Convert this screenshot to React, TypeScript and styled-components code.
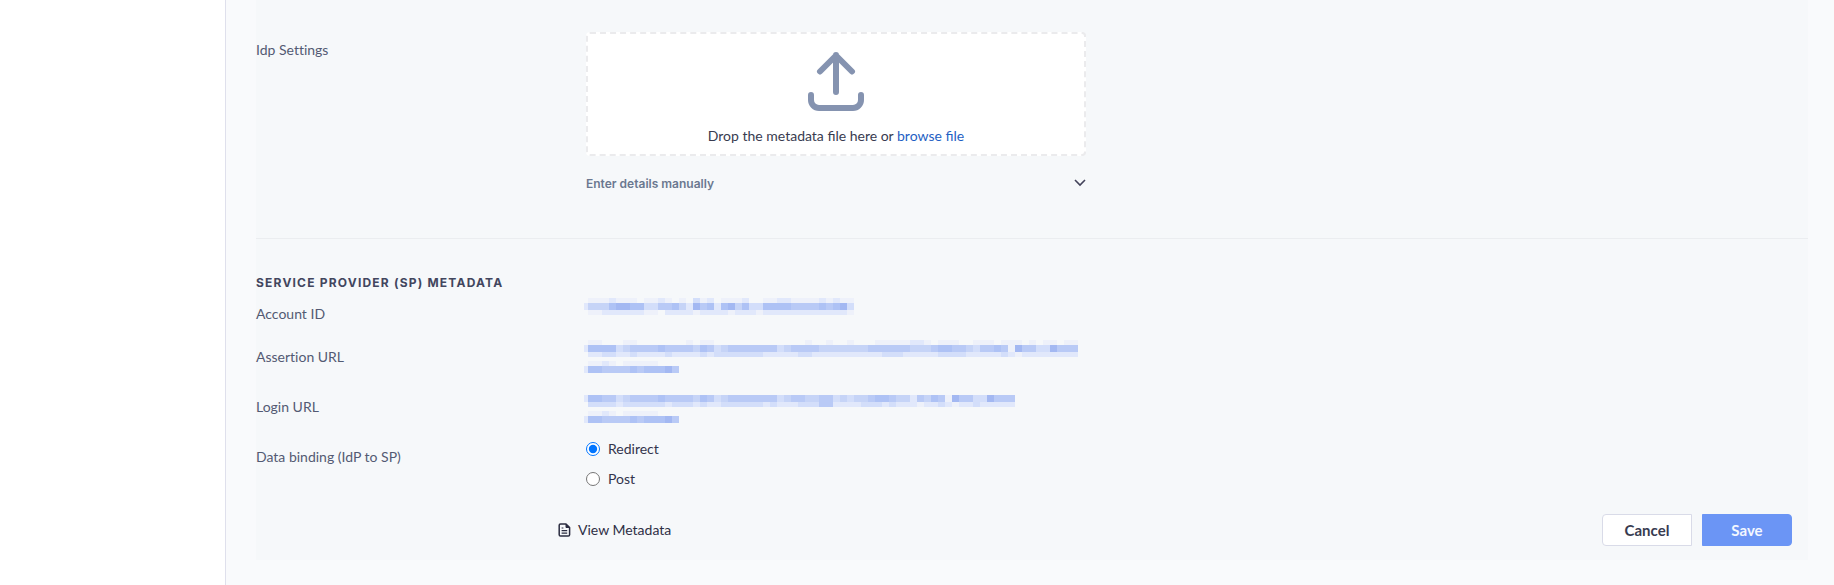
import React, { useState } from "react";
import styled, { createGlobalStyle } from "styled-components";

const GlobalStyle = createGlobalStyle`
  *, *::before, *::after { box-sizing: border-box; }
  body {
    margin: 0;
    background: #f9fafc;
    color: #383b50;
    font-family: Lato, sans-serif;
    font-size: 14px;
    line-height: 20px;
  }
  button, input { font: inherit; color: inherit; }
`;

const Shell = styled.div`
  display: flex;
  min-height: 100vh;
`;

const Sidebar = styled.aside`
  flex: 0 0 226px;
  background: #ffffff;
  border-right: 1px solid #dfe0ec;
`;

const Main = styled.main`
  flex: 1;
  min-width: 0;
  padding: 0 26px 24px 30px;
`;

const Panel = styled.form`
  background: #f6f8fa;
`;

const Section = styled.section<{ $divided?: boolean }>`
  padding-top: ${(p) => (p.$divided ? 33 : 30)}px;
  border-top: ${(p) => (p.$divided ? "1px solid #ebedf0" : "0")};
`;

const Heading = styled.h2`
  margin: 0;
  font-family: Inter, sans-serif;
  font-size: 12px;
  font-weight: 700;
  line-height: 22px;
  letter-spacing: 0.1em;
  text-transform: uppercase;
  color: #42465e;
`;

const Field = styled.div<{ $height: number }>`
  display: grid;
  grid-template-columns: 330px minmax(0, 500px);
  min-height: ${(p) => p.$height}px;
`;

const FieldLabel = styled.div`
  padding-top: 10px;
  color: #535a73;
  font-variant-ligatures: none;
`;

const FieldValue = styled.div<{ $top?: number }>`
  padding-top: ${(p) => p.$top ?? 3}px;
`;

const DropZone = styled.div`
  display: flex;
  flex-direction: column;
  align-items: center;
  gap: 15px;
  height: 124px;
  padding-top: 18px;
  background: #ffffff;
  border: 2px dashed #ebebed;
  border-radius: 4px;
`;

const UploadIcon = styled.svg`
  flex: none;
  width: 56px;
  height: 59px;
  fill: none;
  stroke: #8593b0;
  stroke-width: 6;
  stroke-linecap: round;
  stroke-linejoin: round;
`;

const DropText = styled.p`
  margin: 0;
`;

const BrowseLink = styled.a`
  color: #1f5fc4;
  text-decoration: none;
`;

const Disclosure = styled.button`
  display: flex;
  align-items: center;
  justify-content: space-between;
  width: 100%;
  margin-top: 18px;
  padding: 0;
  border: 0;
  background: none;
  font-family: Inter, sans-serif;
  font-size: 12px;
  font-weight: 600;
  line-height: 20px;
  color: #6b7890;
`;

const Chevron = styled.svg`
  width: 12px;
  height: 12px;
  fill: none;
  stroke: #43435a;
  stroke-width: 1.6;
`;

const MaskLine = styled.svg`
  display: block;
  width: 100%;
  height: 21px;
  overflow: visible;
`;

const RadioGroup = styled.div`
  display: flex;
  flex-direction: column;
  gap: 12px;
`;

const RadioOption = styled.label`
  display: flex;
  align-items: center;
  gap: 8px;
  line-height: 18px;
  color: #33344c;
`;

const Radio = styled.input`
  flex: none;
  width: 14px;
  height: 14px;
  margin: 0;
  accent-color: #0075ff;
`;

const Footer = styled.footer`
  display: flex;
  align-items: center;
  gap: 10px;
  padding: 26px 16px 14px 302px;
`;

const ViewLink = styled.a`
  display: flex;
  align-items: center;
  gap: 7px;
  margin-right: auto;
  color: #2e2f45;
  text-decoration: none;
`;

const DocumentIcon = styled.svg`
  width: 13px;
  height: 14px;
  fill: none;
  stroke: #2b2c40;
  stroke-linejoin: round;
`;

const Button = styled.button<{ $primary?: boolean }>`
  width: 90px;
  height: 32px;
  padding: 0;
  font-size: 15px;
  font-weight: 700;
  color: ${(p) => (p.$primary ? "#f3f7ff" : "#383b50")};
  background: ${(p) => (p.$primary ? "#6b95f5" : "#ffffff")};
  border: 1px solid ${(p) => (p.$primary ? "#6b95f5" : "#d9dbe8")};
  border-radius: ${(p) => (p.$primary ? "0 4px 4px 0" : "4px 0 0 4px")};
`;

/* Tints of the masked values, from clear to dense. */
const TINTS = ["none", "#eef1fa", "#e1e8fb", "#d3defa", "#c6d4f7", "#b9caf6", "#aec2f5", "#a3b8f2"];
const CELL = 7;
const BANDS = [
  { y: 0, height: 5 },
  { y: 5, height: 7 },
  { y: 12, height: 5 },
];

function Mask({ rows }: { rows: string[] }) {
  return (
    <MaskLine aria-hidden="true" shapeRendering="crispEdges">
      <rect x={-2} y={5} width={4} height={7} fill={TINTS[2]} />
      {rows.map((row, band) =>
        row.split("").map((level, i) =>
          level === "0" ? null : (
            <rect
              key={`${band}-${i}`}
              x={2 + i * CELL}
              y={BANDS[band].y}
              width={CELL}
              height={BANDS[band].height}
              fill={TINTS[Number(level)]}
            />
          )
        )
      )}
    </MaskLine>
  );
}

const TAIL = ["1121011111000", "6655556566675"];

const METADATA = [
  {
    label: "Account ID",
    height: 43,
    top: 4,
    lines: [
      [
        "11121110112101031201112001122111121211",
        "44467766335564275626746336666555565673",
        "11222222110222212222122212222222222221",
      ],
    ],
  },
  {
    label: "Assertion URL",
    height: 50,
    top: 3,
    lines: [
      [
        "1100011000000010110000000000000100100100011111221011100111011101011011",
        "6666345555655554653455555553455554444444555555444566554355651755337555",
        "2233223222232222323333333222223322222222223332222233332222232122222222",
      ],
      TAIL,
    ],
  },
  {
    label: "Login URL",
    height: 50,
    top: 3,
    lines: [
      [
        "",
        "6655345555655554653455555553455445534344566544254651755337555",
        "3333233333323332322333333232223335522223332322212232122322222",
      ],
      TAIL,
    ],
  },
];

export default function App() {
  const [binding, setBinding] = useState("redirect");

  return (
    <>
      <GlobalStyle />
      <Shell>
        <Sidebar />
        <Main>
          <Panel onSubmit={(e) => e.preventDefault()}>
            <Section>
              <Field $height={208}>
                <FieldLabel>Idp Settings</FieldLabel>
                <FieldValue $top={2}>
                  <DropZone>
                    <UploadIcon viewBox="0 0 56 59" aria-hidden="true">
                      <path d="M28 40V3M12 19.500L28 3.500L44 19.500" />
                      <path d="M3 43v5a8 8 0 0 0 8 8h34a8 8 0 0 0 8-8v-5" />
                    </UploadIcon>
                    <DropText>
                      Drop the metadata file here or <BrowseLink href="#browse">browse file</BrowseLink>
                    </DropText>
                  </DropZone>
                  <Disclosure type="button" aria-expanded="false">
                    Enter details manually
                    <Chevron viewBox="0 0 12 12" aria-hidden="true">
                      <path d="M1 2L6 7L11 2" />
                    </Chevron>
                  </Disclosure>
                </FieldValue>
              </Field>
            </Section>

            <Section $divided>
              <Heading>Service Provider (SP) Metadata</Heading>
              {METADATA.map((item) => (
                <Field key={item.label} $height={item.height}>
                  <FieldLabel>{item.label}</FieldLabel>
                  <FieldValue $top={item.top}>
                    {item.lines.map((rows, i) => (
                      <Mask key={i} rows={rows} />
                    ))}
                  </FieldValue>
                </Field>
              ))}
              <Field $height={50}>
                <FieldLabel id="binding-label">Data binding (IdP to SP)</FieldLabel>
                <FieldValue>
                  <RadioGroup role="radiogroup" aria-labelledby="binding-label">
                    <RadioOption>
                      <Radio
                        type="radio"
                        name="binding"
                        checked={binding === "redirect"}
                        onChange={() => setBinding("redirect")}
                      />
                      Redirect
                    </RadioOption>
                    <RadioOption>
                      <Radio
                        type="radio"
                        name="binding"
                        checked={binding === "post"}
                        onChange={() => setBinding("post")}
                      />
                      Post
                    </RadioOption>
                  </RadioGroup>
                </FieldValue>
              </Field>
            </Section>

            <Footer>
              <ViewLink href="#metadata">
                <DocumentIcon viewBox="0 0 13 14" aria-hidden="true">
                  <path strokeWidth="1.500" d="M8 1H2.500A1.300 1.300 0 0 0 1.200 2.300V11.700A1.300 1.300 0 0 0 2.500 13H10.300A1.300 1.300 0 0 0 11.600 11.700V4.500Z" />
                  <path fill="#2b2c40" d="M8 1V4.500H11.600Z" />
                  <path strokeWidth="1.200" d="M3.600 5H5.400M3.600 7.600H9.200M3.600 10.200H9.200" />
                </DocumentIcon>
                View Metadata
              </ViewLink>
              <Button type="button">Cancel</Button>
              <Button type="submit" $primary>
                Save
              </Button>
            </Footer>
          </Panel>
        </Main>
      </Shell>
    </>
  );
}
